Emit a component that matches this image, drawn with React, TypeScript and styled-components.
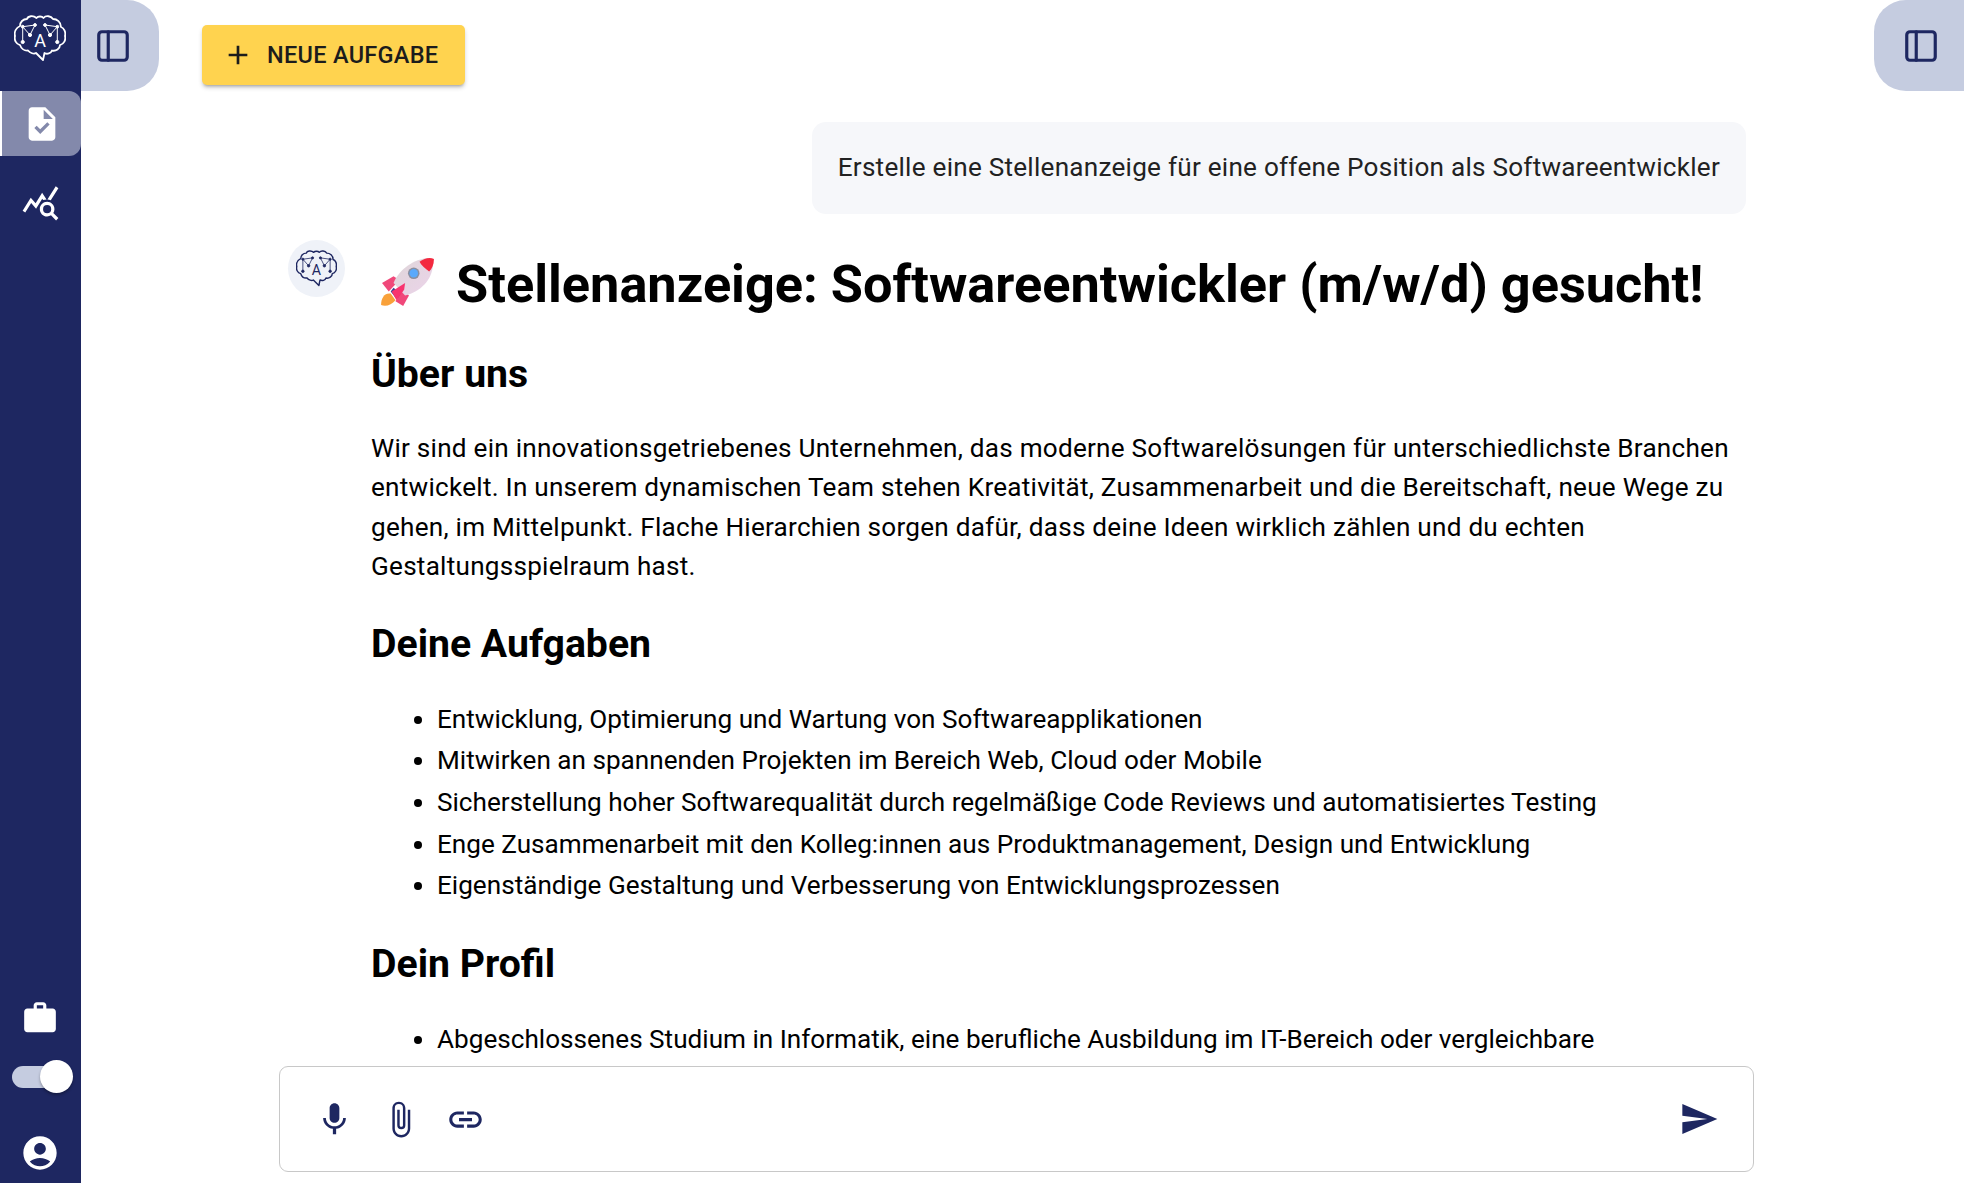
import styled, { createGlobalStyle } from 'styled-components'
import { PanelLeft } from 'lucide-react'
import {
  MdAdd,
  MdAccountCircle,
  MdAttachFile,
  MdLink,
  MdMic,
  MdQueryStats,
  MdSend,
  MdTask,
  MdWork,
} from 'react-icons/md'

const navy = '#1e2761'
const tabBlue = '#c5cce0'

const GlobalStyle = createGlobalStyle`
  html, body {
    margin: 0;
    height: 100%;
    background: #ffffff;
    font-family: Roboto, "Liberation Sans", sans-serif;
  }
  * { box-sizing: border-box; }
`

const Shell = styled.div`
  display: flex;
  width: 100%;
  height: 100vh;
  overflow: hidden;
`

const Sidebar = styled.nav`
  width: 81px;
  flex-shrink: 0;
  display: flex;
  flex-direction: column;
  background: ${navy};
  color: #ffffff;
`

const LogoSlot = styled.div`
  height: 91px;
  padding: 15px 0 0 14px;
`

const NavItem = styled.div<{ $active?: boolean }>`
  height: 65px;
  margin-bottom: 14px;
  display: flex;
  align-items: center;
  justify-content: center;
  background: ${props => (props.$active ? '#8389ab' : 'transparent')};
  border-left: ${props => (props.$active ? '2px solid #ffffff' : 'none')};
  border-radius: 0 12px 12px 0;
`

const SidebarFooter = styled.div`
  margin-top: auto;
  display: flex;
  flex-direction: column;
  align-items: center;
  padding: 0 2px 10px 0;
`

const SwitchTrack = styled.div`
  position: relative;
  width: 56px;
  height: 22px;
  margin: 29px 0 45px;
  border-radius: 11px;
  background: ${tabBlue};
`

const SwitchKnob = styled.div`
  position: absolute;
  top: -6px;
  right: -5px;
  width: 33px;
  height: 33px;
  border-radius: 50%;
  background: #ffffff;
  box-shadow: 0 2px 3px rgba(0, 0, 0, 0.3);
`

const Main = styled.main`
  flex: 1;
  min-width: 0;
  display: flex;
  flex-direction: column;
`

const Toolbar = styled.header`
  height: 91px;
  flex-shrink: 0;
  display: flex;
  align-items: flex-start;
`

const PanelTab = styled.div<{ $side: 'left' | 'right' }>`
  display: flex;
  align-items: center;
  justify-content: ${props => (props.$side === 'left' ? 'flex-start' : 'flex-end')};
  height: 91px;
  width: ${props => (props.$side === 'left' ? '78px' : '90px')};
  padding: ${props => (props.$side === 'left' ? '0 0 0 13px' : '0 24px 0 0')};
  background: ${tabBlue};
  color: ${navy};
  border-radius: ${props => (props.$side === 'left' ? '0 32px 32px 0' : '32px 0 0 32px')};
  margin-left: ${props => (props.$side === 'right' ? 'auto' : '0')};
`

const NewTaskButton = styled.button`
  display: flex;
  align-items: center;
  gap: 13px;
  height: 60px;
  width: 263px;
  margin: 25px 0 0 43px;
  padding: 0 0 0 20px;
  border: none;
  border-radius: 5px;
  background: #ffd34f;
  color: #1c1c1c;
  font-family: inherit;
  font-size: 23.5px;
  font-weight: 500;
  letter-spacing: 0.3px;
  box-shadow: 0 3px 3px -2px rgba(0, 0, 0, 0.25), 0 3px 4px rgba(0, 0, 0, 0.16);
`

const ChatScroll = styled.section`
  flex: 1;
  min-height: 0;
  overflow: hidden;
  padding: 31px 0 0 207px;
`

const UserRow = styled.div`
  display: flex;
  justify-content: flex-end;
  width: 1458px;
`

const UserBubble = styled.div`
  height: 92px;
  padding: 0 26px 2px;
  display: flex;
  align-items: center;
  background: #f6f7fa;
  border-radius: 14px;
  color: #222222;
  font-size: 26.14px;
  letter-spacing: 0.245px;
`

const AnswerRow = styled.article`
  display: flex;
  gap: 26px;
  margin-top: 26px;
`

const Avatar = styled.div`
  width: 57px;
  height: 57px;
  flex-shrink: 0;
  display: flex;
  align-items: center;
  justify-content: center;
  border-radius: 50%;
  background: #eff2f8;
  color: ${navy};
`

const Answer = styled.div`
  width: 1375px;
  color: #000000;
  font-size: 26.14px;
  line-height: 39.375px;
`

const Heading1 = styled.h1`
  display: flex;
  align-items: center;
  gap: 21px;
  margin: 0 0 30.5px 0;
  padding: 9.5px 0 0 9px;
  font-size: 52.3px;
  line-height: 68px;
  font-weight: 700;
  color: #000000;
  white-space: nowrap;
`

const Heading2 = styled.h2`
  margin: 0 0 29px 0;
  font-size: 39.2px;
  line-height: 52px;
  font-weight: 700;
  color: #000000;
`

const Paragraph = styled.p`
  margin: 0 0 31px 0;
  letter-spacing: 0.245px;
`

const BulletList = styled.ul`
  margin: 0 0 31px 0;
  padding-left: 66px;
`

const BulletItem = styled.li`
  line-height: 41.7px;
`

const Composer = styled.div`
  flex-shrink: 0;
  width: 1475px;
  height: 106px;
  margin: 6px 0 11px 198px;
  display: flex;
  align-items: center;
  padding: 0 34px 0 35px;
  gap: 26.5px;
  border: 1.5px solid #c8c8c8;
  border-radius: 9px;
  background: #ffffff;
  color: ${navy};
`

const SendSlot = styled.div`
  margin-left: auto;
  display: flex;
`

const RocketIcon = styled.svg`
  flex-shrink: 0;
  margin-bottom: 3px;
`

const BrainLogo = ({ size }: { size: number }) => (
  <svg width={size} height={size * 0.885} viewBox="0 0 52 46" fill="none" stroke="currentColor" strokeLinejoin="round">
    <path
      strokeWidth="1.8"
      d="M22 38 L29 45 L30.5 38 C33 39.5 37 38.5 38 35.5 C42 36.5 46 33.5 46 30 C50 29 52 25 51 21 C52 17 50 13 47 12 C47 7 43 4 39 4 C37 1 32 0 29.5 3 C28 1 24 1 22.5 3 C19 0 14 1 13 4 C9 4 6 7 6 11 C2 13 0 17 1 21 C0 25 2 29 6 30 C7 33 10 36 14 35.5 C16 38 20 39.5 22 38 Z"
    />
    {[undefined, 'translate(52,0) scale(-1,1)'].map((transform, index) => (
      <g key={index} transform={transform} strokeWidth="1">
        <path d="M8.7 11.7 L21 10 L16 20 Z M8.7 11.7 V27" />
        <circle cx="8.7" cy="11.7" r="1.4" fill="currentColor" />
        <circle cx="21" cy="10" r="1.4" fill="currentColor" />
        <circle cx="16" cy="20" r="1.6" fill="currentColor" />
        <circle cx="8.7" cy="27" r="1.6" fill="currentColor" />
      </g>
    ))}
    <text
      x="26"
      y="32"
      textAnchor="middle"
      fontFamily="Roboto, sans-serif"
      fontSize="18"
      fill="currentColor"
      stroke="none"
    >
      A
    </text>
  </svg>
)

const Rocket = () => (
  <RocketIcon width="55" height="50" viewBox="0 0 57 52">
    <defs>
      <linearGradient id="rocketBody" x1="0" y1="0" x2="1" y2="1">
        <stop offset="0" stopColor="#ded6d8" />
        <stop offset="1" stopColor="#ecd3ea" />
      </linearGradient>
    </defs>
    <path d="M1 50 C1 42 5 37 11 38 L16 45 C12 50 6 52 1 50 Z" fill="#f9a13a" />
    <path d="M11 36 L16 42 L20 44 L24 40 L14 32 Z" fill="#3a3f94" />
    <path d="M2 27 L14 20 L20 24 L9 36 Z" fill="#f0487a" />
    <path d="M24 34 L30 40 L24 51 L16 46 Z" fill="#f0487a" />
    <path d="M14 27 C20 12 36 2 50 1 L55 8 C54 24 42 36 26 40 Z" fill="url(#rocketBody)" />
    <path d="M12 36 L26 27 L25 34 L17 45 Z" fill="#f8346f" />
    <path d="M41 5 C46 1 52 0 56 2 C56 8 54 12 51 15 C47 12 43 9 41 5 Z" fill="#f3293f" />
    <circle cx="35" cy="17" r="6" fill="#8a8f9f" />
    <circle cx="35" cy="17" r="4.4" fill="#5aa9fb" />
  </RocketIcon>
)

const profileItems = [
  'Abgeschlossenes Studium in Informatik, eine berufliche Ausbildung im IT-Bereich oder vergleichbare',
]

const taskItems = [
  'Entwicklung, Optimierung und Wartung von Softwareapplikationen',
  'Mitwirken an spannenden Projekten im Bereich Web, Cloud oder Mobile',
  'Sicherstellung hoher Softwarequalität durch regelmäßige Code Reviews und automatisiertes Testing',
  'Enge Zusammenarbeit mit den Kolleg:innen aus Produktmanagement, Design und Entwicklung',
  'Eigenständige Gestaltung und Verbesserung von Entwicklungsprozessen',
]

export default function App() {
  return (
    <>
      <GlobalStyle />
      <Shell>
        <Sidebar>
          <LogoSlot>
            <BrainLogo size={52} />
          </LogoSlot>
          <NavItem $active>
            <MdTask size={40} />
          </NavItem>
          <NavItem>
            <MdQueryStats size={39} />
          </NavItem>
          <SidebarFooter>
            <MdWork size={38} />
            <SwitchTrack>
              <SwitchKnob />
            </SwitchTrack>
            <MdAccountCircle size={40} />
          </SidebarFooter>
        </Sidebar>
        <Main>
          <Toolbar>
            <PanelTab $side="left">
              <PanelLeft size={38} strokeWidth={2} />
            </PanelTab>
            <NewTaskButton>
              <MdAdd size={32} />
              NEUE AUFGABE
            </NewTaskButton>
            <PanelTab $side="right">
              <PanelLeft size={38} strokeWidth={2} />
            </PanelTab>
          </Toolbar>
          <ChatScroll>
            <UserRow>
              <UserBubble>Erstelle eine Stellenanzeige für eine offene Position als Softwareentwickler</UserBubble>
            </UserRow>
            <AnswerRow>
              <Avatar>
                <BrainLogo size={41} />
              </Avatar>
              <Answer>
                <Heading1>
                  <Rocket />
                  Stellenanzeige: Softwareentwickler (m/w/d) gesucht!
                </Heading1>
                <Heading2>Über uns</Heading2>
                <Paragraph>
                  Wir sind ein innovationsgetriebenes Unternehmen, das moderne Softwarelösungen für unterschiedlichste
                  Branchen entwickelt. In unserem dynamischen Team stehen Kreativität, Zusammenarbeit und die
                  Bereitschaft, neue Wege zu gehen, im Mittelpunkt. Flache Hierarchien sorgen dafür, dass deine Ideen
                  wirklich zählen und du echten Gestaltungsspielraum hast.
                </Paragraph>
                <Heading2>Deine Aufgaben</Heading2>
                <BulletList>
                  {taskItems.map(item => (
                    <BulletItem key={item}>{item}</BulletItem>
                  ))}
                </BulletList>
                <Heading2>Dein Profil</Heading2>
                <BulletList>
                  {profileItems.map(item => (
                    <BulletItem key={item}>{item}</BulletItem>
                  ))}
                </BulletList>
              </Answer>
            </AnswerRow>
          </ChatScroll>
          <Composer>
            <MdMic size={39} />
            <MdAttachFile size={39} />
            <MdLink size={39} />
            <SendSlot>
              <MdSend size={40} />
            </SendSlot>
          </Composer>
        </Main>
      </Shell>
    </>
  )
}
